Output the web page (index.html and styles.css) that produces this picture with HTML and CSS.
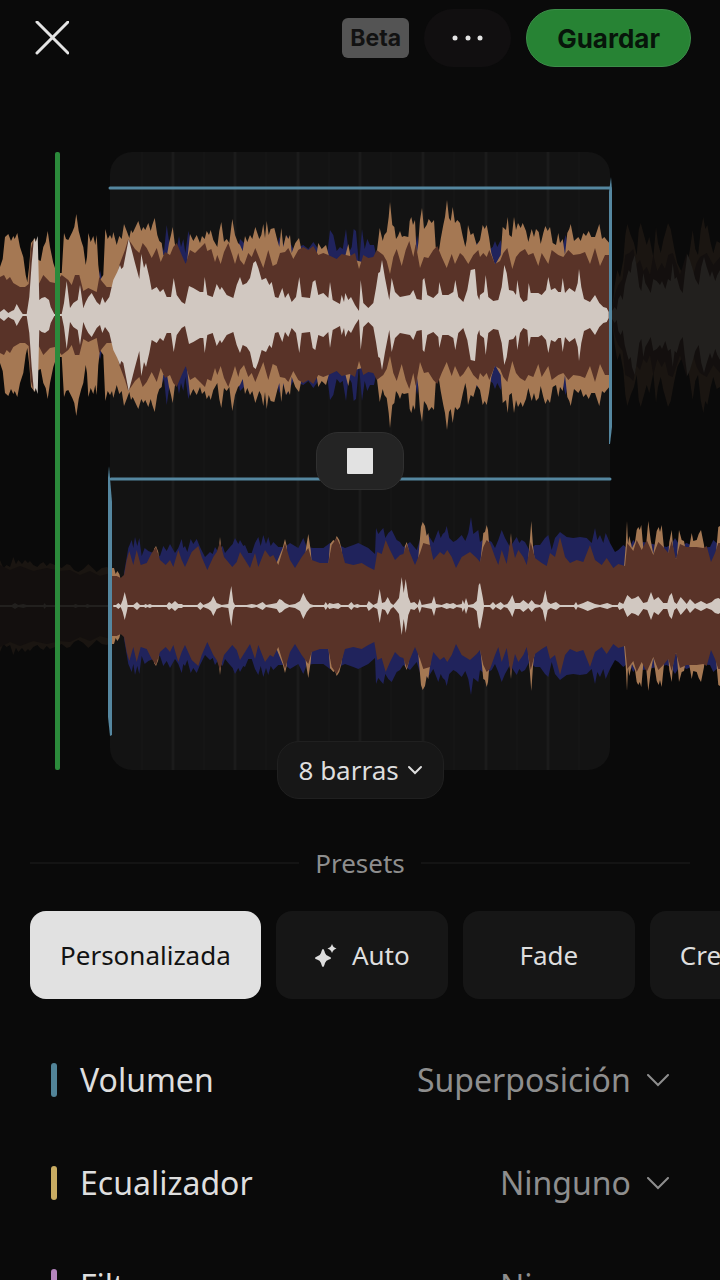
FILE: index.html
```html
<!DOCTYPE html>
<html lang="es">
  <head>
    <meta charset="UTF-8" />
    <meta name="viewport" content="width=device-width, initial-scale=1.0" />
    <title>Transición</title>
    <link rel="stylesheet" href="styles.css">
  </head>
  <body>
    <div class="app">
      <header class="topbar">
        <button class="close" aria-label="Cerrar">
          <svg width="34" height="34" viewBox="0 0 34 34"><path d="M2 1L33 32M33 1L2 32" /></svg>
        </button>
        <span class="beta">Beta</span>
        <button class="more" aria-label="Más opciones">
          <svg width="32" height="6" viewBox="0 0 32 6">
            <circle cx="3" cy="3" r="2.500" /><circle cx="16" cy="3" r="2.500" /><circle cx="28" cy="3" r="2.500" />
          </svg>
        </button>
        <button class="save">Guardar</button>
      </header>

      <section class="editor">
        <svg class="waves" viewBox="0 0 720 618">
          <rect class="zone" x="110" width="500" height="618" rx="22" />
          <path class="beat" d="M173 0V618M235 0V618M298 0V618M360 0V618M423 0V618M486 0V618M548 0V618" />
          <path class="half-beat" d="M142 0V618M204 0V618M266 0V618M329 0V618M391 0V618M454 0V618M517 0V618M579 0V618" />
          <g class="track-a" transform="translate(0 163)"></g>
          <g class="track-b" transform="translate(0 454)"></g>
          <path class="curve" d="M110 36H610" />
          <path class="curve" d="M111 327H610" />
          <path class="curve-end" d="M611 25L612 38V275L610 292H609V40Z" />
          <path class="curve-end" d="M109 314L112 350V583L110 584L108 565V326Z" />
          <rect class="playhead" x="55" width="5" height="618" rx="2" />
        </svg>
        <button class="stop" aria-label="Detener">
          <svg width="26" height="26" viewBox="0 0 26 26"><rect width="26" height="26" rx="1" /></svg>
        </button>
        <div class="picker bars">
          <select aria-label="Duración">
            <option>8 barras</option>
          </select>
          <svg width="16" height="10" viewBox="0 0 16 10"><path d="M2 2L8 8L14 2" /></svg>
        </div>
      </section>

      <h2 class="divider">Presets</h2>

      <div class="presets">
        <button class="preset active">Personalizada</button>
        <button class="preset">
          <svg width="24" height="24" viewBox="0 0 24 24">
            <path d="M9 6Q10 6 11 10Q12 13 15 13.500Q17 14 17 15Q17 16 15 16.500Q12 17 11 20Q10 24 9 24Q8 24 7 20Q6 17 3 16.500Q1 16 1 15Q1 14 3 13.500Q6 13 7 10Q8 6 9 6Z" />
            <path d="M18 1Q19 4.500 22.500 5.500Q19 6.500 18 10Q17 6.500 13.500 5.500Q17 4.500 18 1Z" />
          </svg>
          Auto
        </button>
        <button class="preset">Fade</button>
        <button class="preset">Crescendo</button>
      </div>

      <div class="settings">
        <div class="row volume">
          <label for="volume">Volumen</label>
          <div class="picker">
            <select id="volume">
              <option>Superposición</option>
            </select>
            <svg width="22" height="13" viewBox="0 0 22 13"><path d="M1 1L11 11L21 1" /></svg>
          </div>
        </div>
        <div class="row eq">
          <label for="eq">Ecualizador</label>
          <div class="picker">
            <select id="eq">
              <option>Ninguno</option>
            </select>
            <svg width="22" height="13" viewBox="0 0 22 13"><path d="M1 1L11 11L21 1" /></svg>
          </div>
        </div>
        <div class="row filter">
          <label for="filter">Filtrar</label>
          <div class="picker">
            <select id="filter">
              <option>Ninguno</option>
            </select>
            <svg width="22" height="13" viewBox="0 0 22 13"><path d="M1 1L11 11L21 1" /></svg>
          </div>
        </div>
      </div>
    </div>

    <script src="waves.js"></script>
  </body>
</html>
```
FILE: styles.css
```css
* {
  box-sizing: border-box;
  padding: 0;
  margin: 0;
}
body {
  background-color: #0a0a0a;
  color: #dedede;
  font-family: "Noto Sans", sans-serif;
  font-size: 26px;
}
button,
select {
  border: none;
  background: none;
  color: inherit;
  font: inherit;
  cursor: pointer;
}
svg {
  display: block;
  flex-shrink: 0;
}
.app {
  height: 100vh;
  overflow-x: hidden;
  overflow-y: auto;
  scrollbar-width: none;
}

/* top bar */
.topbar {
  display: flex;
  align-items: center;
  gap: 15px;
  padding: 9px 29px 0 35px;
  font-family: Inter, sans-serif;
  font-weight: 700;
}
.close {
  margin-right: auto;
}
.close path {
  fill: none;
  stroke: #e4e4e4;
  stroke-width: 3;
  stroke-linecap: round;
}
.beta {
  padding: 0 8px;
  border-radius: 6px;
  background-color: #545454;
  color: #121212;
  font-size: 23px;
  line-height: 40px;
}
.more {
  display: flex;
  align-items: center;
  justify-content: center;
  width: 87px;
  height: 58px;
  border-radius: 29px;
  background-color: #110f10;
}
.more circle {
  fill: #e4e4e4;
}
.save {
  height: 58px;
  padding: 0 30px;
  border: 1px solid #3c8d49;
  border-radius: 29px;
  background-color: #278334;
  color: #07150a;
}

/* waveforms */
.editor {
  display: grid;
  place-items: center;
  margin-top: 85px;
}
.editor > * {
  grid-area: 1 / 1;
}
.waves {
  width: 100%;
  height: auto;
}
.zone {
  fill: #131313;
}
.beat {
  stroke: #1b1b1b;
  stroke-width: 3;
}
.half-beat {
  stroke: #151515;
  stroke-width: 2;
}
.blue {
  fill: #20235c;
}
.orange {
  fill: #a57853;
}
.brown {
  fill: #593328;
}
.white {
  fill: #d1c8c1;
}
.dim-outer {
  fill: #1a1511;
}
.dim-brown {
  fill: #130f0e;
}
.dim-white {
  fill: #22201e;
}
.curve {
  stroke: #5587a0;
  stroke-width: 3;
  stroke-linecap: round;
}
.curve-end {
  fill: #5587a0;
}
.playhead {
  fill: #2b8a3b;
}
.stop {
  display: flex;
  align-items: center;
  justify-content: center;
  width: 88px;
  height: 58px;
  border: 1px solid #303030;
  border-radius: 22px;
  background-color: #242424;
}
.stop rect {
  fill: #e2e2e2;
}

/* select with its chevron in the same cell */
.picker {
  display: grid;
  align-items: center;
}
.picker > * {
  grid-area: 1 / 1;
}
.picker select {
  appearance: none;
  padding-right: 38px;
}
.picker svg {
  justify-self: end;
  pointer-events: none;
}
.picker path {
  fill: none;
  stroke: currentColor;
  stroke-width: 2;
  stroke-linecap: round;
}
.bars {
  align-self: end;
  margin-bottom: -29px;
}
.bars select {
  height: 58px;
  padding: 0 43px 0 21px;
  border: 1px solid #202020;
  border-radius: 22px;
  background-color: #171717;
}
.bars svg {
  margin-right: 21px;
}

/* presets */
.divider {
  display: flex;
  align-items: center;
  gap: 16px;
  margin-top: 75px;
  padding: 0 30px;
  color: #8e8e8e;
  font-size: 26px;
  font-weight: 400;
  line-height: 36px;
}
.divider::before,
.divider::after {
  content: "";
  flex: 1;
  height: 2px;
  background-color: #141414;
}
.presets {
  display: flex;
  gap: 15px;
  margin-top: 30px;
  padding: 0 30px;
  overflow-x: auto;
  scrollbar-width: none;
}
.preset {
  display: flex;
  flex-shrink: 0;
  align-items: center;
  justify-content: center;
  gap: 14px;
  min-width: 172px;
  height: 88px;
  padding: 0 30px;
  border-radius: 16px;
  background-color: #161616;
}
.preset.active {
  background-color: #e1e1e1;
  color: #121212;
}
.preset path {
  fill: #dedede;
}

/* settings */
.settings {
  display: grid;
  gap: 59px;
  padding: 59px 51px;
  font-size: 32px;
  line-height: 44px;
}
.row {
  display: flex;
  align-items: center;
  gap: 23px;
}
.row::before {
  content: "";
  width: 6px;
  height: 34px;
  border-radius: 3px;
}
.row .picker {
  margin-left: auto;
  color: #8e8e8e;
}
.volume::before {
  background-color: #528498;
}
.eq::before {
  background-color: #c9ac62;
}
.filter::before {
  background-color: #b484bd;
}
```
FILE: waves.js
```js
// Each layer is a list of [offset, "sample amplitude ..."], three samples per unit of width.
const trackA = {
  "dim-outer": [[1440, "396 5 404 30 412 45 420 38 430 55 436 80 442 91 452 80 462 72 470 60 476 85 482 92 492 80 500 70 508 78 520 58 528 88 534 72 542 62 550 75 556 82 564 92 572 86 582 68 592 52 602 45 612 42 622 50 630 66 638 85 646 66 654 60 662 85 670 98 676 86 682 90 692 72 700 62 710 74 720 72"]],
  "dim-brown": [[1440, "396 5 406 22 415 30 428 36 436 60 448 62 460 66 468 50 480 55 490 44 500 48 510 40 520 60 532 44 545 52 555 46 565 60 578 62 590 50 600 40 620 62 632 52 640 40 650 52 660 58 680 62 700 50 720 58"]],
  "dim-white": [[1440, "396 4 404 8 410 5 415 16 422 20 428 15 434 30 440 38 446 45 452 42 456 52 464 60 470 48 478 28 484 24 490 42 496 32 506 26 512 22 520 36 530 34 540 30 546 34 556 26 564 36 572 34 578 52 584 36 590 38 600 26 608 22 614 40 622 61 630 55 638 46 646 36 656 30 664 48 672 58 680 48 690 38 696 44 706 34 712 40 720 45"]],
  blue: [
    [0, "285 0 296 38 300 45 306 35 320 0 470 0 480 72 492 64 500 90 508 72 518 70 530 66 537 79 543 68 550 76 556 62 565 84 573 74 590 50 710 60"],
    [720, "0 76 12 72 100 50 118 78 130 70 140 80 160 66 190 70 205 66 220 73 235 66 262 62 270 85 280 80 290 64 300 68 308 66 318 86 326 62 335 68 341 86 348 84 357 50 366 86 374 66 382 76 390 70 402 70 415 50 520 50 531 80 540 60 600 60 715 72"],
    [1440, "0 60 30 66 38 68 45 74 52 68 62 75 70 60 240 60 257 80 270 60 386 60"]
  ],
  orange: [
    [0, "0 48 8 56 15 78 25 81 33 74 40 79 44 76 52 82 60 68 70 58 77 40 82 33 88 50 93 72 105 77 115 55 122 54 130 68 137 73 143 84 150 68 160 52 170 42 185 42 192 82 198 76 205 75 217 83 223 88 229 101 236 84 244 74 250 68 257 50 261 58 265 82 272 73 280 79 286 70 290 80 295 50 300 35 310 40 316 86 323 76 330 80 336 76 340 83 350 70 358 79 365 76 372 91 380 84 388 77 393 85 398 82 405 87 415 94 424 84 430 88 436 85 445 92 452 84 457 90 464 97 472 80 478 74 485 72 490 60 500 58 507 72 513 80 518 88 524 72 532 58 560 50 570 81 580 74 590 80 600 72 606 79 614 76 620 84 627 80 632 85 640 75 652 68 658 84 664 93 672 73 680 76 688 72 693 86 697 96 705 80 714 72"],
    [720, "0 70 8 64 15 79 22 73 30 80 37 76 46 88 58 76 64 80 70 91 75 77 80 94 86 80 92 86 103 87 112 75 118 68 124 87 130 68 138 80 145 76 150 80 155 62 166 72 177 77 184 66 200 50 225 50 235 72 245 66 258 70 268 58 290 50 315 58 325 71 333 56 400 50 410 62 419 87 428 74 433 80 440 83 446 98 450 113 457 90 463 88 468 76 474 79 480 84 486 78 492 79 505 78 509 94 514 98 519 90 525 95 530 60 535 72 540 95 546 107 552 86 560 90 566 96 575 92 582 95 587 68 595 60 602 76 610 90 615 98 621 115 627 97 632 94 638 108 645 92 652 95 660 92 668 79 676 68 680 75 684 90 692 80 700 82 710 70"],
    [1440, "0 75 8 90 14 86 20 90 27 78 34 62 45 50 62 60 68 88 78 85 83 98 88 80 95 78 102 98 108 85 114 92 122 87 128 92 138 84 145 73 155 86 162 78 168 86 176 83 182 71 190 82 196 89 203 84 210 88 218 72 228 70 235 82 240 72 248 76 255 60 262 82 268 86 272 91 282 74 295 78 302 74 310 82 318 79 326 84 334 78 345 78 358 91 366 76 373 78 380 75 388 72"]
  ],
  brown: [
    [0, "0 38 12 40 20 35 30 38 40 32 60 28 75 28 86 31 92 65 100 75 115 30 130 40 150 33 165 32 185 40 205 35 215 30 225 40 238 40 250 24 265 27 290 23 298 38 305 34 320 28 335 28 350 35 358 50 375 65 385 76 395 71 405 66 418 62 428 72 440 67 455 57 463 62 470 67 482 53 495 63 510 60 520 68 530 72 545 60 557 51 570 65 585 62 600 67 615 72 622 64 634 66 645 53 652 60 662 51 672 63 685 72 697 60 705 51 715 62"],
    [720, "0 55 12 50 25 62 35 58 46 67 58 57 70 47 85 65 98 49 110 51 120 62 135 63 145 67 160 56 175 65 190 68 205 65 220 69 235 60 250 62 265 60 290 56 305 61 330 59 345 62 357 46 370 60 385 57 400 58 410 65 430 60 440 54 450 41 460 58 470 66 485 49 497 65 508 74 520 58 527 71 540 47 552 58 565 57 580 65 592 69 605 58 620 47 635 61 645 51 660 62 670 59 685 51 700 60 715 65"],
    [1440, "0 58 10 62 20 58 28 65 45 51 60 54 70 62 82 67 97 46 108 58 120 63 135 66 145 60 160 62 175 49 185 62 205 51 215 65 235 60 250 58 265 65 280 60 300 61 315 63 330 51 345 67 360 49 375 60 388 60"]
  ],
  white: [
    [0, "0 3 12 6 25 2 35 4 42 5 50 11 60 5 68 1 80 1 88 18 95 52 102 77 107 73 113 79 118 15 125 17 135 18 147 15 152 8 163 1 185 1 192 12 200 34 210 7 220 12 233 15 240 30 250 7 257 13 265 18 275 22 290 13 300 10 307 18 315 12 328 18 340 35 352 43 360 50 364 46 370 48 378 62 386 76 395 65 405 52 418 36 424 61 432 47 438 52 448 38 455 25 470 28 480 23 490 26 500 18 513 18 521 37 530 20 545 13 555 11 567 29 580 27 600 23 610 23 614 38 622 20 638 18 650 31 660 25 665 28 680 20 700 17 710 30"],
    [720, "0 38 8 30 20 32 30 37 40 52 47 54 55 47 65 35 78 37 88 30 95 33 105 18 115 17 127 27 135 17 145 22 155 13 168 18 178 38 185 18 210 17 218 33 226 35 235 20 250 22 265 17 270 33 278 15 300 11 305 20 312 13 316 22 325 15 333 18 345 10 357 4 362 35 370 12 385 7 400 12 408 27 415 42 420 43 426 55 435 37 448 15 455 37 465 23 480 18 510 20 520 25 530 16 545 15 548 35 553 37 562 20 580 17 595 22 598 33 607 20 625 20 640 23 646 35 655 18 670 13 682 25 692 45 705 46 712 20 718 15"],
    [1440, "0 20 12 23 17 40 25 18 40 14 55 15 65 28 73 50 80 42 87 25 100 24 108 20 112 35 120 18 130 13 142 15 146 32 152 22 175 22 185 20 198 25 205 38 213 25 225 27 235 23 243 23 248 37 255 22 268 27 285 23 293 32 297 46 304 28 312 16 330 13 345 20 358 12 370 8 380 7 386 3"]
  ]
};

const trackB = {
  "dim-outer": [[0, "0 46 10 38 20 41 30 39 40 49 48 42 55 46 66 42 75 46 84 43 90 45 100 41 112 39 120 42 130 44 140 40 150 43 165 41 185 38 200 42 210 41 222 36 235 34 250 37 265 42 278 38 290 34 305 38 320 39 332 37"]],
  "dim-brown": [[0, "0 41 30 36 60 40 100 35 140 38 180 35 210 36 240 31 270 35 300 30 332 33"]],
  "dim-white": [[0, "0 1 35 1 45 3 55 1 70 2 80 1 130 1 134 3 138 1 220 1 227 2 234 1 256 1 262 2 270 1 332 1"]],
  blue: [
    [0, "365 0 372 33 385 58 395 66 400 58 405 69 412 60 418 68 425 50 434 58 445 55 460 53 480 50 490 60 500 55 510 62 525 53 535 58 545 67 550 58 555 60 562 54 572 67 580 62 590 67 600 59 615 49 630 54 638 52 645 59 655 54 668 60 675 53 690 59 698 62 705 68 715 62"],
    [720, "0 66 10 60 15 61 25 53 35 53 45 63 55 69 62 60 70 71 78 62 85 69 92 60 100 64 115 59 135 59 150 63 175 58 190 68 200 59 220 58 250 58 270 63 290 62 315 58 340 61 355 63 385 58 405 52 408 78 415 72 422 75 430 78 436 68 445 73 455 76 470 66 480 64 490 59 510 64 530 56 545 72 565 71 580 63 595 76 602 68 608 72 615 74 620 80 628 68 640 64 650 66 665 71 676 65 685 73 693 89 700 72 715 76"],
    [1440, "0 64 15 68 35 64 45 58 55 66 65 76 75 68 90 59 110 69 118 63 125 66 135 64 148 56 165 61 180 61 195 68 205 71 215 56 225 68 240 74 260 69 280 68 300 69 320 68 335 63 345 78 352 66 360 71 370 63 377 73 390 63 405 54 415 56 430 61 437 59 450 60 460 66 475 60 490 64 560 59 575 62 585 68 600 60 620 63 650 58 690 59 700 66 710 63 720 65"]
  ],
  orange: [
    [0, "334 38 342 38 347 32 352 35 358 32 364 24 456 30 462 57 468 60 475 54 480 30 650 35 656 56 660 69 664 58 670 35 715 35"],
    [720, "100 35 128 58 135 67 140 60 145 30 190 30 198 58 205 72 212 56 218 30 264 35 270 62 280 66 285 65 290 70 298 66 304 58 315 30 488 30 495 60 500 64 505 58 515 30 530 30 538 60 543 79 548 84 555 80 560 70 565 73 570 60 580 30 700 30"],
    [1440, "0 40 10 73 15 74 20 81 24 76 28 60 40 30 84 40 93 73 100 40 140 30 149 64 154 85 159 60 170 30 430 30 437 60 441 85 444 62 448 70 456 58 465 64 470 76 475 79 479 76 484 81 490 58 498 60 505 85 512 66 520 52 530 75 536 79 540 74 545 81 552 58 560 30 568 64 575 76 582 48 590 48 597 76 605 66 612 65 620 50 628 59 635 73 640 65 650 66 656 72 663 76 672 61 680 35 706 45 715 79 720 80"]
  ],
  brown: [
    [0, "336 30 350 30 362 28 372 31 380 46 388 55 400 41 410 56 422 41 440 43 455 53 468 59 480 46 497 41 510 46 520 39 535 56 545 46 555 39 575 54 595 60 605 49 622 36 640 49 650 54 660 64 672 49 697 39 710 44"],
    [720, "0 54 15 46 30 38 45 53 55 39 75 56 90 49 100 51 115 41 135 63 150 46 165 38 185 49 205 58 215 46 240 43 265 43 275 61 290 68 300 61 315 43 340 41 365 43 385 39 403 36 412 54 425 52 437 66 450 56 465 46 480 51 490 52 500 62 510 53 525 41 540 53 550 63 570 61 580 46 600 54 612 51 622 56 635 49 648 38 665 49 690 54 710 48"],
    [1440, "0 44 10 59 20 66 30 63 45 49 55 41 65 56 80 42 92 68 105 48 115 56 130 49 140 41 152 64 165 48 185 43 200 40 210 53 225 49 240 69 255 49 270 43 290 46 310 44 330 61 345 46 365 41 380 48 400 38 415 42 435 40 442 63 460 55 470 66 485 56 500 66 520 51 535 64 550 59 565 53 575 65 588 47 600 62 620 59 650 59 670 58 680 60 693 44 705 53 715 63 720 63"]
  ],
  white: [
    [0, "340 1 348 1 355 3 362 1 368 6 374 14 380 6 383 1 400 1 411 4 420 1 432 1 437 2 442 1 450 2 456 1 500 1 507 4 515 2 525 5 535 2 545 2 550 1 568 1 575 1 592 1 601 4 610 1 625 3 633 5 640 10 650 3 665 1 685 2 690 13 694 20 700 4 705 1"],
    [720, "0 1 20 1 35 2 50 1 68 4 78 1 95 2 110 3 118 7 125 6 135 3 148 1 165 2 180 5 190 13 200 6 210 2 220 1 252 1 257 4 263 1 268 3 280 2 295 3 303 1 325 1 334 4 342 1 352 2 360 1 380 1 386 5 400 1 412 3 419 17 426 3 435 4 443 9 452 3 460 1 468 4 477 8 485 29 491 13 497 27 505 9 512 3 523 4 533 1 539 7 545 1 560 2 575 3 582 10 588 2 605 1 620 3 630 2 640 3 650 1 665 2 668 6 673 2 678 8 685 1 700 2 710 5 716 21"],
    [1440, "0 23 8 9 12 1 30 1 39 4 47 1 62 4 72 1 82 2 90 6 97 11 105 3 120 3 130 6 145 2 155 6 165 2 180 1 188 4 196 16 203 4 212 2 228 4 240 1 282 1 288 4 293 1 310 3 323 5 345 2 360 1 382 3 397 1 413 1 418 4 430 2 442 11 455 7 465 8 475 10 490 3 502 4 513 14 522 6 535 9 550 3 562 3 568 10 575 13 583 4 590 2 602 9 620 2 630 7 645 2 663 5 680 2 695 4 705 7 715 8 720 7"]
  ]
};

function wavePath(segments) {
  const top = [];
  const bottom = [];
  segments.forEach(function ([offset, samples]) {
    const values = samples.split(" ").map(Number);
    for (let i = 0; i < values.length; i += 2) {
      const x = ((offset + values[i]) / 3).toFixed(1);
      top.push(`${x} ${-values[i + 1]}`);
      bottom.unshift(`${x} ${values[i + 1]}`);
    }
  });
  // the lower half mirrors the upper one
  return `M${top.join("L")}L${bottom.join("L")}Z`;
}

function drawTrack(selector, track) {
  const group = document.querySelector(selector);
  for (const layer in track) {
    const path = document.createElementNS("http://www.w3.org/2000/svg", "path");
    path.setAttribute("class", layer);
    path.setAttribute("d", wavePath(track[layer]));
    group.appendChild(path);
  }
}

drawTrack(".track-a", trackA);
drawTrack(".track-b", trackB);
```
